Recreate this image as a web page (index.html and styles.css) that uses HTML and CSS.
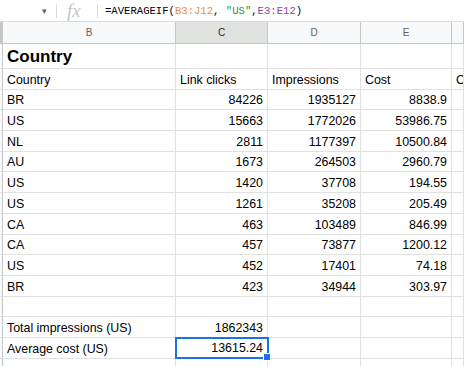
FILE: index.html
```html
<!DOCTYPE html>
<html lang="en">
<head>
  <meta charset="UTF-8" />
  <title>Sheet</title>
  <link rel="stylesheet" href="styles.css">
</head>
<body>
  <div class="formula-bar">
    <span class="name-arrow">▾</span>
    <span class="sep"></span>
    <span class="fx">fx</span>
    <span class="sep"></span>
    <span class="formula">=AVERAGEIF(<span class="ref-a">B3:J12</span>, <span class="str">"US"</span>,<span class="ref-b">E3:E12</span>)</span>
  </div>

  <div class="sheet">
    <div class="rh head"></div>
    <div class="ch">B</div>
    <div class="ch active">C</div>
    <div class="ch">D</div>
    <div class="ch">E</div>
    <div class="ch"></div>

    <div class="rh title-row"></div>
    <div class="cell title title-row">Country</div>
    <div class="cell title-row"></div>
    <div class="cell title-row"></div>
    <div class="cell title-row"></div>
    <div class="cell title-row"></div>

    <div class="rh"></div>
    <div class="cell">Country</div>
    <div class="cell">Link clicks</div>
    <div class="cell">Impressions</div>
    <div class="cell">Cost</div>
    <div class="cell">C</div>
  </div>

  <script>
    const rows = [
      ["BR", 84226, 1935127, "8838.9"],
      ["US", 15663, 1772026, "53986.75"],
      ["NL", 2811, 1177397, "10500.84"],
      ["AU", 1673, 264503, "2960.79"],
      ["US", 1420, 37708, "194.55"],
      ["US", 1261, 35208, "205.49"],
      ["CA", 463, 103489, "846.99"],
      ["CA", 457, 73877, "1200.12"],
      ["US", 452, 17401, "74.18"],
      ["BR", 423, 34944, "303.97"]
    ];
    const sheet = document.querySelector(".sheet");

    function addRow(cells) {
      let html = '<div class="rh"></div>';
      cells.forEach(c => {
        const cls = c.num ? "cell num" : "cell";
        html += `<div class="${cls}${c.sel ? ' selected' : ''}">${c.text ?? ""}</div>`;
      });
      sheet.insertAdjacentHTML("beforeend", html);
    }

    rows.forEach(r => {
      addRow([
        { text: r[0] },
        { text: r[1], num: true },
        { text: r[2], num: true },
        { text: r[3], num: true },
        {}
      ]);
    });
    addRow([{}, {}, {}, {}, {}]);
    addRow([{ text: "Total impressions (US)" }, { text: 1862343, num: true }, {}, {}, {}]);
    addRow([{ text: "Average cost (US)" }, { text: "13615.24", num: true, sel: true }, {}, {}, {}]);
    addRow([{}, {}, {}, {}, {}]);
  </script>
</body>
</html>
```

FILE: styles.css
```css
* {
  margin: 0;
  padding: 0;
  box-sizing: border-box;
}

body {
  width: 464px;
  height: 366px;
  overflow: hidden;
  background: #fff;
  font-family: 'Liberation Sans', Arial, sans-serif;
  color: #000;
}

.formula-bar {
  height: 22px;
  display: flex;
  align-items: center;
  border-bottom: 1px solid #dadce0;
  background: #fff;
}

.name-arrow {
  margin-left: 42px;
  width: 10px;
  font-size: 9px;
  color: #5f6368;
}

.sep {
  width: 1px;
  height: 14px;
  background: #dadce0;
  margin-left: 4px;
}

.fx {
  margin-left: 10px;
  width: 26px;
  font-family: 'Liberation Serif', serif;
  font-style: italic;
  font-size: 19px;
  color: #c4c7c5;
}

.formula {
  margin-left: 7px;
  font-family: 'Liberation Mono', monospace;
  font-size: 10.6px;
  color: #000;
}

.ref-a { color: #e8903e; }
.str { color: #3a8f3f; }
.ref-b { color: #8e3fa8; }

.sheet {
  display: grid;
  grid-template-columns: 3px 173px 92px 93px 91px 12px;
  grid-template-rows: 22px 25px;
  grid-auto-rows: 20.7px;
}

.rh {
  background: #f8f9fa;
  border-right: 1px solid #c4c7c5;
  border-bottom: 1px solid #e1e1e1;
}

.rh.head {
  background: #c4c7c5;
  border-bottom: 1px solid #c4c7c5;
}

.ch {
  background: #f8f9fa;
  border-right: 1px solid #c4c7c5;
  border-bottom: 1px solid #c4c7c5;
  font-size: 10px;
  color: #5f6368;
  display: flex;
  align-items: center;
  justify-content: center;
}

.ch.active {
  background: #e1e3e1;
  color: #1f1f1f;
}

.cell {
  border-right: 1px solid #e1e1e1;
  border-bottom: 1px solid #e1e1e1;
  font-size: 12.4px;
  padding: 0 4px 2px;
  display: flex;
  align-items: flex-end;
  white-space: nowrap;
  overflow: hidden;
}

.cell.num {
  justify-content: flex-end;
}

.title {
  font-size: 17px;
  font-weight: bold;
  padding-bottom: 1px;
}

.selected {
  position: relative;
  overflow: visible;
  border: 2px solid #1a73e8;
  margin: -1px -1px 0 -1px;
  padding-right: 4px;
}

.selected::after {
  content: "";
  position: absolute;
  right: -4px;
  bottom: -4px;
  width: 6px;
  height: 6px;
  background: #1a73e8;
  border: 1px solid #fff;
}
```
